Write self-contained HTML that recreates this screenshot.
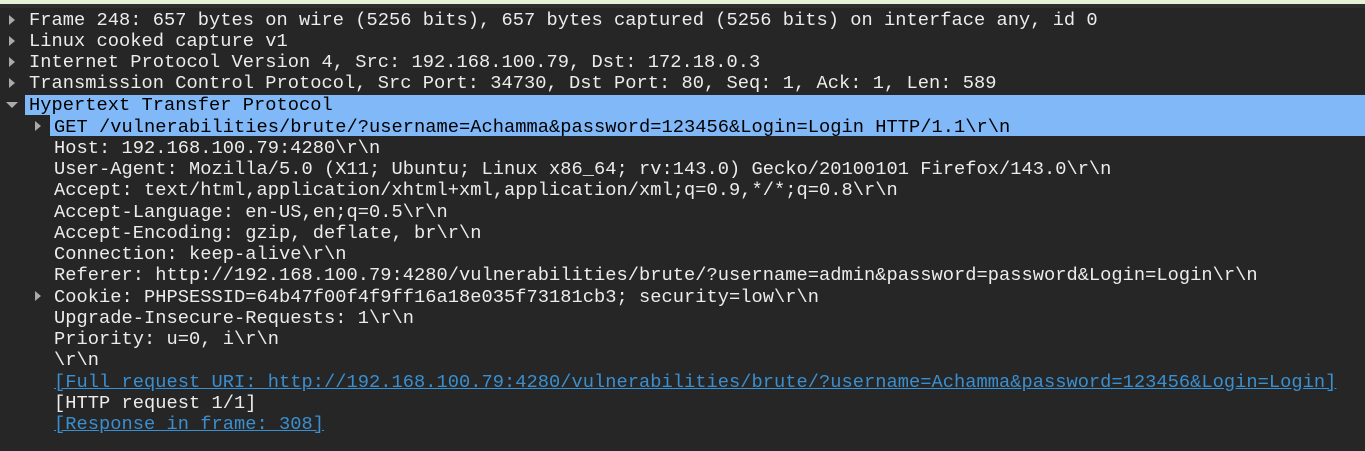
<!DOCTYPE html>
<html><head><meta charset="utf-8"><style>
body{margin:0;width:1365px;height:451px;background:#262626;overflow:hidden;font-family:"Liberation Mono",monospace;font-size:18.7px;letter-spacing:0.035px;color:#ececec;position:relative}
.top{position:absolute;left:0;top:0;width:1365px;height:4px;background:#e6f2d6}
.bar{position:absolute;left:0;top:4px;width:1365px;height:4px;background:#2e2e2e}
.r{position:absolute;height:21px;line-height:21px;white-space:pre}
.l0{left:29px}.l1{left:54px}
.a{position:absolute;width:0;height:0;border-top:5px solid transparent;border-bottom:5px solid transparent;border-left:6px solid #aaa}
.d{position:absolute;width:0;height:0;border-left:6px solid transparent;border-right:6px solid transparent;border-top:6px solid #aaa}
.sel{position:absolute;background:#80b8f8}
.k{color:#000}
.lnk{color:#3a8fd0;text-decoration:underline}
</style></head><body>
<div class="top"></div><div class="bar"></div>
<div class="sel" style="left:25px;top:95px;width:1340px;height:20px"></div>
<div class="sel" style="left:50px;top:115px;width:1315px;height:21px"></div>
<div class="a" style="left:9px;top:15px"></div>
<div class="a" style="left:9px;top:36px"></div>
<div class="a" style="left:9px;top:57px"></div>
<div class="a" style="left:9px;top:78px"></div>
<div class="d" style="left:6px;top:102px"></div>
<div class="a" style="left:35px;top:121px"></div>
<div class="a" style="left:35px;top:291px"></div>
<div class="r l0" style="top:10px">Frame 248: 657 bytes on wire (5256 bits), 657 bytes captured (5256 bits) on interface any, id 0</div>
<div class="r l0" style="top:31px">Linux cooked capture v1</div>
<div class="r l0" style="top:52px">Internet Protocol Version 4, Src: 192.168.100.79, Dst: 172.18.0.3</div>
<div class="r l0" style="top:73px">Transmission Control Protocol, Src Port: 34730, Dst Port: 80, Seq: 1, Ack: 1, Len: 589</div>
<div class="r l0 k" style="top:95px">Hypertext Transfer Protocol</div>
<div class="r l1 k" style="top:117px">GET /vulnerabilities/brute/?username=Achamma&amp;password=123456&amp;Login=Login HTTP/1.1\r\n</div>
<div class="r l1" style="top:138px">Host: 192.168.100.79:4280\r\n</div>
<div class="r l1" style="top:159px">User-Agent: Mozilla/5.0 (X11; Ubuntu; Linux x86_64; rv:143.0) Gecko/20100101 Firefox/143.0\r\n</div>
<div class="r l1" style="top:180px">Accept: text/html,application/xhtml+xml,application/xml;q=0.9,*/*;q=0.8\r\n</div>
<div class="r l1" style="top:202px">Accept-Language: en-US,en;q=0.5\r\n</div>
<div class="r l1" style="top:223px">Accept-Encoding: gzip, deflate, br\r\n</div>
<div class="r l1" style="top:244px">Connection: keep-alive\r\n</div>
<div class="r l1" style="top:265px">Referer: http://192.168.100.79:4280/vulnerabilities/brute/?username=admin&amp;password=password&amp;Login=Login\r\n</div>
<div class="r l1" style="top:287px">Cookie: PHPSESSID=64b47f00f4f9ff16a18e035f73181cb3; security=low\r\n</div>
<div class="r l1" style="top:308px">Upgrade-Insecure-Requests: 1\r\n</div>
<div class="r l1" style="top:329px">Priority: u=0, i\r\n</div>
<div class="r l1" style="top:350px">\r\n</div>
<div class="r l1 lnk" style="top:372px">[Full request URI: http://192.168.100.79:4280/vulnerabilities/brute/?username=Achamma&amp;password=123456&amp;Login=Login]</div>
<div class="r l1" style="top:393px">[HTTP request 1/1]</div>
<div class="r l1 lnk" style="top:414px">[Response in frame: 308]</div>
</body></html>
